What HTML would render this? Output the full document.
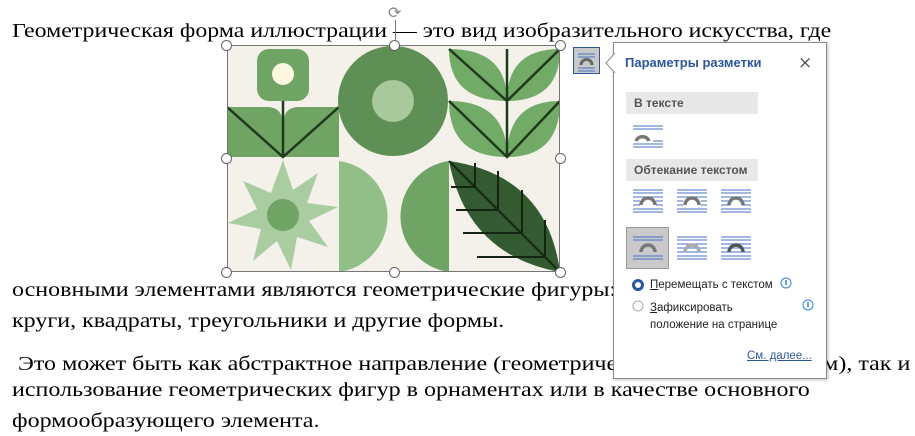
<!DOCTYPE html>
<html><head><meta charset="utf-8"><style>
body{margin:0;width:915px;height:436px;background:#fff;position:relative;overflow:hidden;font-family:"Liberation Serif",serif;}
.t{position:absolute;left:12px;font-size:20.5px;line-height:22px;white-space:nowrap;color:#000;transform-origin:0 0;transform:scaleX(1.172)}
.p{position:absolute;left:613px;top:42px;width:212px;height:335px;background:#fff;border:1px solid #8a8a8a;box-shadow:1px 1px 3px rgba(0,0,0,.25);font-family:"Liberation Sans",sans-serif;}
.bar{position:absolute;left:12px;width:132px;height:22px;background:#e8e8e8;color:#555;font-weight:bold;font-size:12px;line-height:22px;padding-left:8px;box-sizing:border-box}
.ic{position:absolute;width:30px;height:26px}
.h{position:absolute;width:11px;height:11px;border:1.3px solid #666;border-radius:50%;background:#fff;box-sizing:border-box}
</style></head><body>
<div class="t" style="top:20px;transform:scaleX(1.165)">Геометрическая форма иллюстрации</div>
<div class="t" style="top:20px;left:393px;transform:scaleX(1.16)">— это вид изобразительного искусства, где</div>
<div class="t" style="top:279px">основными элементами являются геометрические фигуры: точки, линии,</div>
<div class="t" style="top:310px">круги, квадраты, треугольники и другие формы.</div>
<div class="t" style="top:353px">&nbsp;Это может быть как абстрактное направление (геометрический абстракционизм), так и</div>
<div class="t" style="top:379px">использование геометрических фигур в орнаментах или в качестве основного</div>
<div class="t" style="top:410px">формообразующего элемента.</div>

<svg style="position:absolute;left:227px;top:45px" width="333" height="227" viewBox="0 0 333 227">
<rect width="333" height="227" fill="#f3f1ea"/>
<rect x="30" y="4" width="52" height="52" rx="12" fill="#6fa465"/>
<circle cx="56" cy="29" r="11" fill="#fbf8df"/>
<path d="M0 62 H40 Q56 62 56 80 V112 H0Z M112 62 H72 Q56 62 56 80 V112 H112Z" fill="#6fa465"/>
<path d="M0 62 L56 112 L112 62 M56 56 V112" stroke="#1f3a1a" stroke-width="2.5" fill="none"/>
<circle cx="166" cy="56" r="55" fill="#5e8f54"/>
<circle cx="166" cy="56" r="21" fill="#a7c99c"/>
<path d="M222 4 Q280 4 280 56 Q222 56 222 4Z M333 4 Q280 4 280 56 Q333 56 333 4Z M222 56 Q280 56 280 112 Q222 112 222 56Z M333 56 Q280 56 280 112 Q333 112 333 56Z" fill="#72aa68"/>
<path d="M222 4 L280 56 L333 4 M222 56 L280 112 L333 56 M280 4 V112" stroke="#1f3a1a" stroke-width="2.5" fill="none"/>
<g fill="#a9cca0" transform="translate(56,170)">
<path d="M0-55 L10-25 L35-42 L24-12 L55-8 L26 6 L45 32 L14 22 L8 55 L-6 26 L-30 46 L-22 14 L-55 8 L-26-6 L-40-34 L-12-22Z"/>
</g>
<circle cx="56" cy="170" r="16" fill="#6fa465"/>
<path d="M112 116 A56 56 0 0 1 112 227Z" fill="#92bf88"/>
<path d="M222 116 A56 56 0 0 0 222 227Z" fill="#6fa465"/>
<path d="M222 116 Q320 130 333 227 Q240 210 222 116Z" fill="#335a31"/>
<path d="M222 116 L333 227 M248 118 V142 M271 126 V165 M295 145 V188 M318 175 V211 M224 142 H248 M229 165 H271 M236 188 H295 M250 212 H318" stroke="#142612" stroke-width="2" fill="none"/>
<rect x="0.5" y="0.5" width="332" height="226" fill="none" stroke="#777"/>
</svg>
<div style="position:absolute;left:395px;top:20px;width:1px;height:25px;background:#777"></div>
<div style="position:absolute;left:388px;top:3px;font-size:16px;color:#888;font-family:'DejaVu Sans'">⟳</div>
<div class="h" style="left:221px;top:40px"></div><div class="h" style="left:389px;top:40px"></div><div class="h" style="left:555px;top:40px"></div>
<div class="h" style="left:221px;top:153px"></div><div class="h" style="left:555px;top:153px"></div>
<div class="h" style="left:221px;top:267px"></div><div class="h" style="left:389px;top:267px"></div><div class="h" style="left:555px;top:267px"></div>

<svg style="position:absolute;left:573px;top:47px" width="27" height="27"><rect x=".5" y=".5" width="26" height="26" fill="#c9c9c9" stroke="#2b579a"/><path d="M5 7H22M5 10H22M5 21H22M5 24H22" stroke="#4472c4"/><path d="M8 18A5.5 5.5 0 0 1 19 18" stroke="#666" stroke-width="3" fill="none"/></svg>

<div class="p">
<svg style="position:absolute;left:-9px;top:10px" width="10" height="20"><path d="M10 0L1 10L10 20" fill="#fff" stroke="#8a8a8a"/></svg>
<div style="position:absolute;left:11px;top:12px;color:#2b579a;font-weight:bold;font-size:13px">Параметры разметки</div>
<div style="position:absolute;left:184px;top:10px;color:#555;font-size:17px;font-family:'DejaVu Sans'">×</div>
<div class="bar" style="top:49px">В тексте</div>
<svg class="ic" style="left:19px;top:82px" viewBox="0 0 30 26"><path d="M0 1H30M0 4H30M20 16H30M0 19H30M0 22H30" stroke="#4472c4"/><path d="M3 16A7 7 0 0 1 16 16" stroke="#777" stroke-width="3.5" fill="none"/></svg>
<div class="bar" style="top:116px">Обтекание текстом</div>
<svg class="ic" style="left:19px;top:146px" viewBox="0 0 30 26"><path d="M0 1H30M0 4H30M0 8H30M0 12H7M23 12H30M0 16H7M23 16H30M0 20H30M0 23H30" stroke="#4472c4"/><path d="M8 16A7 7 0 0 1 22 16" stroke="#777" stroke-width="3.5" fill="none"/></svg>
<svg class="ic" style="left:63px;top:146px" viewBox="0 0 30 26"><path d="M0 1H30M0 4H30M0 8H30M0 12H6M24 12H30M0 16H6M24 16H30M0 20H30M0 23H30" stroke="#4472c4"/><path d="M8 16A7 7 0 0 1 22 16" stroke="#777" stroke-width="3.5" fill="none"/></svg>
<svg class="ic" style="left:107px;top:146px" viewBox="0 0 30 26"><path d="M0 1H30M0 4H30M0 8H30M0 12H9M21 12H30M0 16H9M21 16H30M0 20H30M0 23H30" stroke="#4472c4"/><path d="M8 16A7 7 0 0 1 22 16" stroke="#777" stroke-width="3.5" fill="none"/></svg>
<div style="position:absolute;left:12px;top:184px;width:43px;height:42px;background:#c9c9c9;border:1px solid #999;box-sizing:border-box"></div>
<svg class="ic" style="left:19px;top:193px" viewBox="0 0 30 26"><path d="M0 1H30M0 4H30M0 20H30M0 23H30" stroke="#4472c4"/><path d="M8 16A7 7 0 0 1 22 16" stroke="#777" stroke-width="3.5" fill="none"/></svg>
<svg class="ic" style="left:63px;top:193px" viewBox="0 0 30 26"><path d="M0 1H30M0 4H30M0 8H30M0 12H30M0 16H30M0 20H30M0 23H30" stroke="#4472c4"/><path d="M8 16A7 7 0 0 1 22 16" stroke="#aaa" stroke-width="3.5" fill="none"/></svg>
<svg class="ic" style="left:107px;top:193px" viewBox="0 0 30 26"><path d="M0 1H30M0 4H30M0 8H30M0 12H30M0 16H30M0 20H30M0 23H30" stroke="#4472c4"/><path d="M8 16A7 7 0 0 1 22 16" stroke="#555" stroke-width="3.5" fill="none"/></svg>
<svg style="position:absolute;left:18px;top:236px" width="12" height="12"><circle cx="6" cy="6" r="4.5" fill="#fff" stroke="#2b579a" stroke-width="3"/></svg>
<div style="position:absolute;left:36px;top:236px;font-size:11.5px;color:#222"><u>П</u>еремещать с текстом</div>
<svg style="position:absolute;left:166px;top:234px" width="12" height="12"><circle cx="6" cy="6" r="5" fill="none" stroke="#2e86d6"/><path d="M6 3V8" stroke="#2e86d6" stroke-width="1.5"/></svg>
<svg style="position:absolute;left:18px;top:257px" width="12" height="12"><circle cx="6" cy="6" r="5" fill="#fff" stroke="#aaa"/></svg>
<div style="position:absolute;left:36px;top:257px;font-size:11.5px;color:#222;line-height:17px"><u>З</u>афиксировать<br>положение на странице</div>
<svg style="position:absolute;left:188px;top:256px" width="12" height="12"><circle cx="6" cy="6" r="5" fill="none" stroke="#2e86d6"/><path d="M6 3V8" stroke="#2e86d6" stroke-width="1.5"/></svg>
<div style="position:absolute;left:133px;top:307px;font-size:11.5px;color:#2b579a;text-decoration:underline">См. далее...</div>
</div>
</body></html>
